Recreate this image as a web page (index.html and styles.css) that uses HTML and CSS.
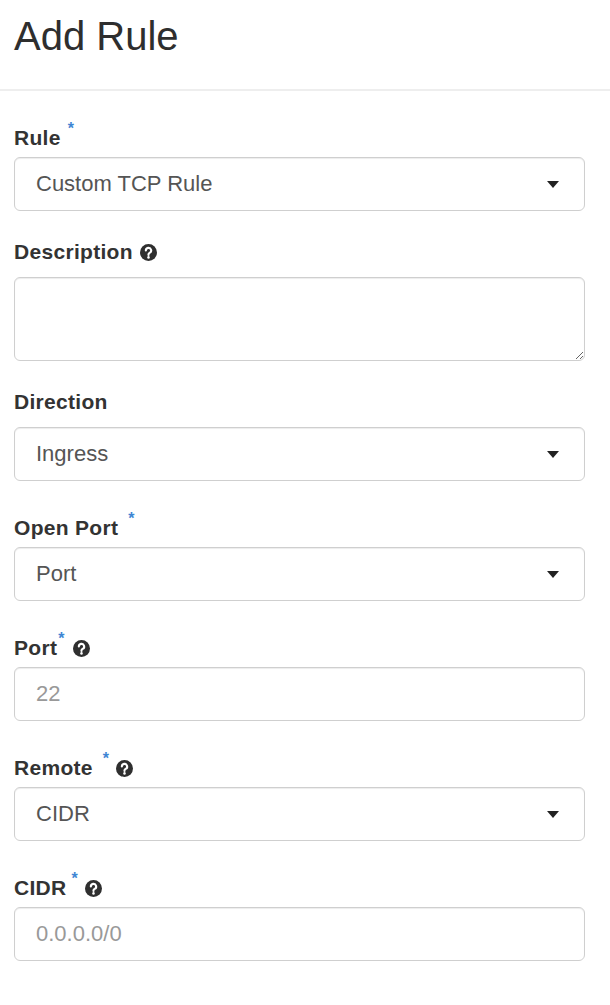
FILE: index.html
```html
<!DOCTYPE html>
<html lang="en">
<head>
<meta charset="utf-8">
<title>Add Rule</title>
<link rel="stylesheet" href="styles.css">
</head>
<body>
<div class="modal">
  <div class="header"><h1 class="title">Add Rule</h1></div>
  <form class="form">
    <div class="group">
      <label class="label">Rule<span class="req wide">*</span></label>
      <div class="control select"><span class="value">Custom TCP Rule</span><span class="caret"></span></div>
    </div>
    <div class="group">
      <label class="label">Description<svg class="help" viewBox="0 0 16 16"><circle cx="8" cy="8" r="8" fill="#2f2f2f"/><path d="M5.5 6.1a2.5 2.5 0 1 1 3.6 2.250c-.75.4-1.1.85-1.1 1.6v.4" fill="none" stroke="#fff" stroke-width="2" stroke-linecap="round"/><circle cx="8" cy="12.6" r="1.2" fill="#fff"/></svg></label>
      <textarea class="control area"></textarea>
    </div>
    <div class="group">
      <label class="label">Direction</label>
      <div class="control select"><span class="value">Ingress</span><span class="caret"></span></div>
    </div>
    <div class="group">
      <label class="label">Open Port<span class="req wider">*</span></label>
      <div class="control select"><span class="value">Port</span><span class="caret"></span></div>
    </div>
    <div class="group">
      <label class="label">Port<span class="req">*</span><svg class="help after-req" viewBox="0 0 16 16"><circle cx="8" cy="8" r="8" fill="#2f2f2f"/><path d="M5.5 6.1a2.5 2.5 0 1 1 3.6 2.25c-.75.4-1.1.85-1.1 1.6v.4" fill="none" stroke="#fff" stroke-width="2" stroke-linecap="round"/><circle cx="8" cy="12.6" r="1.2" fill="#fff"/></svg></label>
      <input class="control input" type="text" placeholder="22">
    </div>
    <div class="group">
      <label class="label">Remote<span class="req wider">*</span><svg class="help" viewBox="0 0 16 16"><circle cx="8" cy="8" r="8" fill="#2f2f2f"/><path d="M5.5 6.1a2.5 2.5 0 1 1 3.6 2.25c-.75.4-1.1.85-1.1 1.6v.4" fill="none" stroke="#fff" stroke-width="2" stroke-linecap="round"/><circle cx="8" cy="12.6" r="1.2" fill="#fff"/></svg></label>
      <div class="control select"><span class="value">CIDR</span><span class="caret"></span></div>
    </div>
    <div class="group">
      <label class="label">CIDR<span class="req mid">*</span><svg class="help" viewBox="0 0 16 16"><circle cx="8" cy="8" r="8" fill="#2f2f2f"/><path d="M5.5 6.1a2.5 2.5 0 1 1 3.6 2.25c-.75.4-1.1.85-1.1 1.6v.4" fill="none" stroke="#fff" stroke-width="2" stroke-linecap="round"/><circle cx="8" cy="12.6" r="1.2" fill="#fff"/></svg></label>
      <input class="control input" type="text" placeholder="0.0.0.0/0">
    </div>
  </form>
</div>
</body>
</html>
```

FILE: styles.css
```css
html, body {
  margin: 0;
  padding: 0;
  background: #fff;
}

body {
  font-family: "Liberation Sans", Arial, Helvetica, sans-serif;
  color: #333;
}

.header {
  padding: 12px 0 29px 14px;
  border-bottom: 2px solid #eeeeee;
}

.title {
  margin: 0;
  font-size: 40px;
  line-height: 48px;
  font-weight: 400;
  color: #2e2e2e;
}

.form {
  padding: 30px 25px 0 14px;
  margin: 0;
}

.group {
  margin-bottom: 30px;
}

.label {
  display: block;
  height: 22px;
  line-height: 22px;
  font-size: 21px;
  font-weight: 700;
  letter-spacing: 0.3px;
  color: #333;
  margin-bottom: 14px;
  white-space: nowrap;
}

.req {
  display: inline-block;
  font-size: 16px;
  font-weight: 700;
  line-height: 1;
  color: #3f86d4;
  vertical-align: 11px;
  margin-left: 1px;
  letter-spacing: 0;
}

.req.mid {
  margin-left: 5px;
}

.req.wide {
  margin-left: 7px;
}

.req.wider {
  margin-left: 10px;
}

.help {
  display: inline-block;
  width: 17px;
  height: 17px;
  vertical-align: -2px;
  margin-left: 7px;
}

.help.after-req {
  margin-left: 9px;
}

.control {
  display: block;
  box-sizing: border-box;
  width: 100%;
  margin: 0;
  border: 1px solid #cfcfcf;
  border-radius: 6px;
  background: #fff;
  box-shadow: inset 0 1px 1px rgba(0, 0, 0, 0.075);
  font-family: "Liberation Sans", Arial, Helvetica, sans-serif;
  font-size: 22px;
  color: #555;
}

.select {
  height: 54px;
  display: flex;
  align-items: center;
  padding: 0 25px 0 21px;
}

.value {
  flex: 1;
}

.caret {
  width: 0;
  height: 0;
  border-top: 7px solid #222;
  border-left: 6px solid transparent;
  border-right: 6px solid transparent;
}

.area {
  height: 84px;
  padding: 10px 21px;
  resize: vertical;
  outline: none;
}

.input {
  height: 54px;
  padding: 0 21px;
  outline: none;
}

.input::placeholder {
  color: #999;
  opacity: 1;
}
```
